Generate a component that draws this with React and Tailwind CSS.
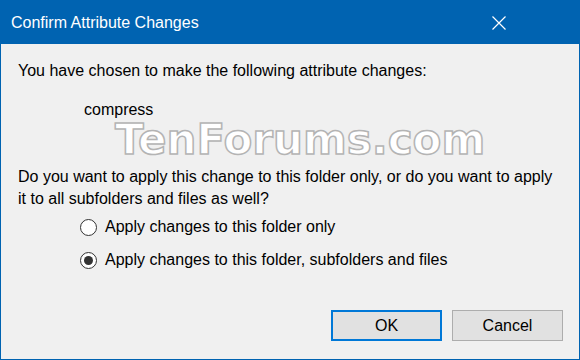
import React from 'react';

function Radio({ checked, label }) {
  return (
    <label className="flex items-center h-[22px]">
      <span className="w-[17px] h-[17px] rounded-full border border-[#333333] bg-white flex items-center justify-center mr-[8px]">
        {checked && <span className="w-[9px] h-[9px] rounded-full bg-[#333333]" />}
      </span>
      <span>{label}</span>
    </label>
  );
}

export default function App() {
  return (
    <div className="w-[580px] h-[360px] bg-[#0063b1] p-px flex flex-col font-['Liberation_Sans',Arial,sans-serif] text-[16px] text-black">
      {/* Title bar */}
      <div className="h-[43px] flex items-center justify-between pl-[10px] pr-[73px] text-white text-[16px]">
        <span>Confirm Attribute Changes</span>
        <svg width="14" height="14" viewBox="0 0 14 14" stroke="white" strokeWidth="1.2" fill="none">
          <path d="M0.5 0.5 L13.5 13.5 M13.5 0.5 L0.5 13.5" />
        </svg>
      </div>

      {/* Body */}
      <div className="flex-1 bg-[#f0f0f0] relative pl-[17px] pt-[17px]">
        <p className="leading-[20px]">You have chosen to make the following attribute changes:</p>
        <p className="leading-[20px] pl-[66px] mt-[19px]">compress</p>

        {/* watermark */}
        <div className="absolute left-[114px] top-[81px] whitespace-nowrap font-['DejaVu_Sans',sans-serif] text-[42px] font-[700] text-white [-webkit-text-stroke:1.5px_#b4b4b4] leading-[30px] pointer-events-none">
          TenForums.com
        </div>

        <p className="leading-[22px] mt-[46px]">
          Do you want to apply this change to this folder only, or do you want to apply
          <br />
          it to all subfolders and files as well?
        </p>

        <div className="pl-[62px] mt-[6px] flex flex-col gap-[11px]">
          <Radio label="Apply changes to this folder only" />
          <Radio checked label="Apply changes to this folder, subfolders and files" />
        </div>

        <div className="absolute right-[16px] bottom-[18px] flex gap-[10px]">
          <button className="w-[111px] h-[31px] bg-[#e1e1e1] border-2 border-[#0078d7]">OK</button>
          <button className="w-[111px] h-[31px] bg-[#e1e1e1] border border-[#adadad]">Cancel</button>
        </div>
      </div>
    </div>
  );
}
